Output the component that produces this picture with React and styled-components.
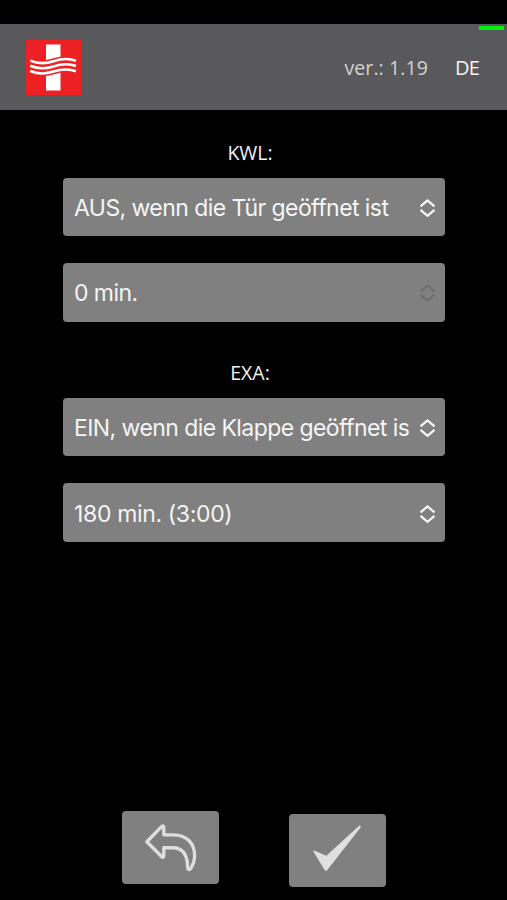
import React from "react";
import styled, { createGlobalStyle } from "styled-components";

const GlobalStyle = createGlobalStyle`
  * {
    box-sizing: border-box;
  }

  body {
    margin: 0;
    background: #000;
  }
`;

const Screen = styled.div`
  width: 507px;
  height: 900px;
  padding-top: 24px;
  display: flex;
  flex-direction: column;
  background: #000;
  color: #f2f2f2;
  font-family: "Open Sans", "Noto Sans", sans-serif;
  overflow: hidden;
`;

const Header = styled.header`
  position: relative;
  height: 85.5px;
  flex-shrink: 0;
  padding: 1px 28px 0 25.5px;
  display: flex;
  align-items: center;
  background: #59595b;
`;

const StatusBar = styled.span`
  position: absolute;
  top: 1.5px;
  right: 3.5px;
  width: 25px;
  height: 4px;
  background: #00f010;
`;

const Version = styled.span`
  margin-left: auto;
  padding-top: 2px;
  font-size: 19.5px;
  line-height: 24px;
  letter-spacing: 0.1px;
  color: #d2d2d3;
`;

const Language = styled.span`
  margin-left: 27px;
  padding-top: 2px;
  font-size: 20px;
  line-height: 24px;
  letter-spacing: -0.8px;
  color: #f4f4f4;
`;

const Form = styled.main`
  flex: 1;
  padding: 30px 62px 0 63px;
`;

const Group = styled.section`
  display: flex;
  flex-direction: column;
  margin-bottom: 38px;
`;

const GroupTitle = styled.h2`
  margin: 0 0 12px;
  padding-right: 8px;
  height: 26px;
  font-size: 19.5px;
  font-weight: 400;
  line-height: 26px;
  text-align: center;
`;

const Select = styled.button`
  height: 58.6px;
  padding: 2px 9.5px 0 11px;
  display: flex;
  align-items: center;
  justify-content: space-between;
  border: 0;
  border-radius: 4px;
  background: #808080;
  color: #f5f5f5;
  font-family: Inter, sans-serif;
  font-size: 23px;
  text-align: left;

  & + & {
    margin-top: 27px;
  }
`;

const SelectText = styled.span`
  white-space: nowrap;
  line-height: 32px;
  letter-spacing: ${({ $spacing }) => $spacing || "-0.57px"};
`;

const Arrows = styled.svg`
  width: 17px;
  height: 20px;
  flex-shrink: 0;
  fill: none;
  stroke: ${({ $disabled }) => ($disabled ? "#6a6a6a" : "#f7f7f7")};
  stroke-width: ${({ $disabled }) => ($disabled ? 1.8 : 2.3)};
`;

const Footer = styled.footer`
  height: 89px;
  padding-left: 122px;
  display: flex;
  gap: 70px;
`;

const ActionButton = styled.button`
  width: 97px;
  height: 73px;
  margin-top: ${({ $top }) => $top || "0"};
  padding: 0;
  border: 0;
  border-radius: 4px;
  background: #808080;

  svg {
    display: block;
    width: 100%;
    height: 100%;
  }
`;

const WAVES = [20.6, 25.8, 31];

const wavePath = (y) => `M4.3 ${y}c7 3 15 3.300 23.200.6s15-3.100 22.500-.4`;

const Logo = () => (
  <svg width="55" height="55" viewBox="0 0 55 55">
    <rect width="55" height="55" fill="#ed2024" />
    <rect x="20" y="4.5" width="14.5" height="46" fill="#fff" />
    <g fill="none">
      {WAVES.map((y) => (
        <path key={y} d={wavePath(y)} stroke="#ed2024" strokeWidth="5.6" />
      ))}
      {WAVES.map((y) => (
        <path key={y} d={wavePath(y)} stroke="#fff" strokeWidth="2.6" />
      ))}
    </g>
  </svg>
);

const SelectField = ({ text, spacing, disabled }) => (
  <Select disabled={disabled}>
    <SelectText $spacing={spacing}>{text}</SelectText>
    <Arrows viewBox="0 0 17 20" $disabled={disabled}>
      <path d="M1.500 8.400 8.500 2.400l7 6M1.500 11.800l7 6 7-6" />
    </Arrows>
  </Select>
);

const App = () => {
  return (
    <>
      <GlobalStyle />
      <Screen>
        <Header>
          <Logo />
          <Version>ver.: 1.19</Version>
          <Language>DE</Language>
          <StatusBar />
        </Header>
        <Form>
          <Group>
            <GroupTitle>KWL:</GroupTitle>
            <SelectField text="AUS, wenn die Tür geöffnet ist" />
            <SelectField text="0 min." disabled />
          </Group>
          <Group>
            <GroupTitle>EXA:</GroupTitle>
            <SelectField text="EIN, wenn die Klappe geöffnet is" />
            <SelectField text="180 min. (3:00)" spacing="-0.35px" />
          </Group>
        </Form>
        <Footer>
          <ActionButton aria-label="Zurück">
            <svg viewBox="0 0 97.500 73.500">
              <path
                d="M25 31 40 15.500C41 14.500 42 15 42 16.500V24H51C65 24 73 32 73 45C73 50 71.500 54 69 58C68 59.500 66 59 66 57C66 44 61 37 51 37H42V45C42 46.500 41 47 40 46L25 31Z"
                fill="none"
                stroke="#dedede"
                strokeWidth="3.400"
                strokeLinejoin="round"
              />
            </svg>
          </ActionButton>
          <ActionButton aria-label="Bestätigen" $top="2.5px">
            <svg viewBox="0 0 97.500 73.500">
              <path
                d="M24.500 36.500 37.500 42 70.500 11.800Q72.500 11 72 13.500L38.500 56.500Q37 58.500 35.500 56L24.500 37.800Z"
                fill="#e0e0e0"
              />
            </svg>
          </ActionButton>
        </Footer>
      </Screen>
    </>
  );
};

export default App;
